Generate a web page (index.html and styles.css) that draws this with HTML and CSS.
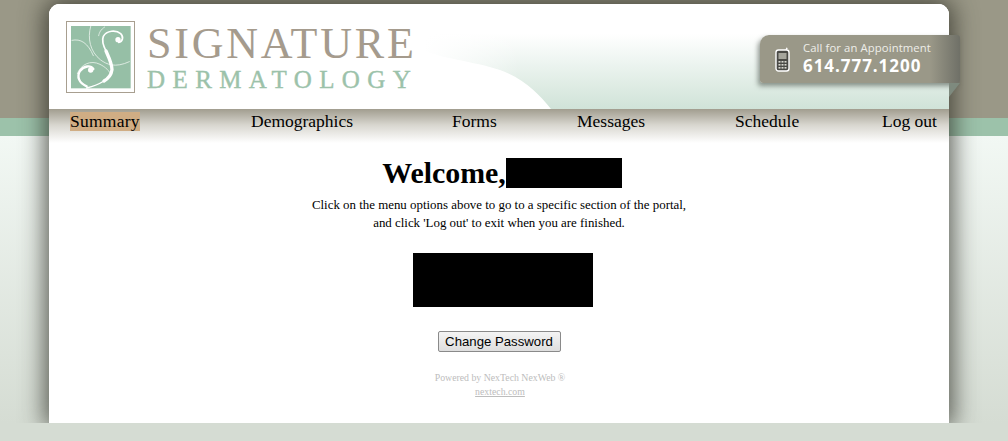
FILE: index.html
```html
<!DOCTYPE html>
<html lang="en">
<head>
<meta charset="utf-8">
<title>Signature Dermatology</title>
<link rel="stylesheet" href="styles.css">
</head>
<body>
<div class="page">
  <main class="card">
    <header class="header">
      <svg class="swoosh" width="900" height="105" viewBox="0 0 900 105" aria-hidden="true">
        <path d="M0 0H900V30H370V44C390 55 425 57 451 66C475 75 490 90 502 105H0Z" fill="#fff"/>
      </svg>
      <div class="logo">
        <svg class="mark" width="69" height="72" viewBox="18 18 207 216" aria-hidden="true">
          <rect x="19.5" y="19.5" width="204" height="213" fill="#fff" stroke="#a89f90" stroke-width="3"/>
          <rect x="33" y="33" width="179" height="187" fill="#96bfa6"/>
          <g fill="none" stroke="#e9f2ec" stroke-linecap="round" stroke-width="2.5">
            <path d="M92 34C82 70 90 110 122 135C140 148 165 160 208 140"/>
            <path d="M36 76C62 70 84 84 100 122"/>
            <path d="M134 36C122 44 118 52 116 62"/>
            <path d="M52 176C62 148 92 134 120 148C136 156 150 168 152 180"/>
          </g>
          <g fill="none" stroke="#fff" stroke-linecap="round">
            <path d="M176 82C188 80 192 66 182 56C168 44 140 46 130 64C124 78 130 92 138 108" stroke-width="5"/>
            <path d="M138 108C146 126 156 146 156 164C154 180 146 190 132 198" stroke-width="10"/>
            <path d="M132 198C116 208 100 214 80 219" stroke-width="4"/>
            <path d="M100 162C92 150 72 152 60 168C50 184 56 204 80 214" stroke-width="7"/>
          </g>
          <circle cx="174" cy="74" r="8" fill="#fff"/>
          <circle cx="92" cy="165" r="8" fill="#fff"/>
        </svg>
        <div class="wordmark">
          <div class="word-top">SIGNATURE</div>
          <div class="word-bottom">DERMATOLOGY</div>
        </div>
      </div>
    </header>
    <aside class="badge">
      <svg class="phone" width="15" height="25" viewBox="0 0 15 25" aria-hidden="true">
        <path d="M11 3.5L12 .8" stroke="#fff" stroke-width="1.4" fill="none"/>
        <rect x="1" y="3" width="13" height="21" rx="2.5" fill="#4a4a46" stroke="#fff" stroke-width="1.4"/>
        <rect x="3.5" y="6" width="8" height="6" fill="#a5a59c"/>
        <g fill="#d8d8d0">
          <rect x="3.5" y="14" width="2" height="1.6"/><rect x="6.5" y="14" width="2" height="1.6"/><rect x="9.5" y="14" width="2" height="1.6"/>
          <rect x="3.5" y="17" width="2" height="1.6"/><rect x="6.5" y="17" width="2" height="1.6"/><rect x="9.5" y="17" width="2" height="1.6"/>
          <rect x="3.5" y="20" width="2" height="1.6"/><rect x="6.5" y="20" width="2" height="1.6"/><rect x="9.5" y="20" width="2" height="1.6"/>
        </g>
      </svg>
      <div class="badge-text">
        <div class="badge-label">Call for an Appointment</div>
        <div class="badge-number">614.777.1200</div>
      </div>
    </aside>
    <nav class="nav">
      <a class="nav-link active" href="#">Summary</a>
      <a class="nav-link" href="#">Demographics</a>
      <a class="nav-link" href="#">Forms</a>
      <a class="nav-link" href="#">Messages</a>
      <a class="nav-link" href="#">Schedule</a>
      <a class="nav-link" href="#">Log out</a>
    </nav>
    <section class="content">
      <h1 class="welcome">Welcome,<span class="redact-name"></span></h1>
      <p class="intro">Click on the menu options above to go to a specific section of the portal,<br>and click 'Log out' to exit when you are finished.</p>
      <div class="redact-block"></div>
      <button class="change" type="button">Change Password</button>
      <p class="powered">Powered by NexTech NexWeb ®<br><a href="#">nextech.com</a></p>
    </section>
  </main>
</div>
</body>
</html>
```
FILE: styles.css
```css
html, body {
  margin: 0;
  height: 441px;
  overflow: hidden;
}
body {
  background: #d5dcd3;
  font-family: "Liberation Serif", serif;
}
.page {
  height: 423px;
  box-sizing: border-box;
  padding: 4px 0 0 49px;
  overflow: hidden;
  background:
    linear-gradient(180deg, #9a9887 0, #9a9887 118px, #9cc2aa 118px, #9cc2aa 136px, transparent 136px),
    linear-gradient(180deg, #f2f8f4 136px, #d5dcd3 423px);
}
.card {
  position: relative;
  width: 900px;
  height: 419px;
  background: #fff;
  border-radius: 11px 11px 0 0;
  box-shadow: 0 0 24px 4px rgba(40, 40, 32, .75);
}
.header {
  position: relative;
  height: 105px;
  box-sizing: border-box;
  padding: 17px 0 0 17px;
  border-radius: 11px 11px 0 0;
  overflow: hidden;
  background:
    linear-gradient(90deg, #fff 375px, rgba(255, 255, 255, 0) 470px),
    linear-gradient(180deg, #fff 30px, #d0e3d8 105px);
}
.swoosh {
  position: absolute;
  left: 0;
  top: 0;
}
.logo {
  position: relative;
  display: flex;
  gap: 12px;
}
.mark {
  display: block;
}
.word-top {
  font-size: 44px;
  line-height: 46px;
  letter-spacing: 2.8px;
  color: #a59b8d;
}
.word-bottom {
  font-size: 25px;
  line-height: 26px;
  letter-spacing: 7.4px;
  color: #9cc2aa;
  -webkit-text-stroke: .4px #9cc2aa;
}
.badge {
  position: absolute;
  left: 711px;
  top: 31px;
  width: 200px;
  height: 48px;
  box-sizing: border-box;
  padding: 0 0 0 15px;
  display: flex;
  align-items: center;
  gap: 13px;
  color: #fff;
  border-radius: 9px 3px 3px 3px;
  background: linear-gradient(90deg, #9a9888 0, #9a9888 85%, #6f7067 100%);
  box-shadow: -2px 3px 5px rgba(60, 70, 60, .55);
}
.badge::after {
  content: "";
  position: absolute;
  right: 0;
  top: 48px;
  border-top: 14px solid #7e8a7e;
  border-right: 11px solid transparent;
}
.phone {
  flex: none;
}
.badge-text {
  font-family: "Open Sans", sans-serif;
}
.badge-label {
  font-size: 11.3px;
  line-height: 14px;
  letter-spacing: .1px;
  color: #eeeee8;
}
.badge-number {
  font-size: 17px;
  line-height: 22px;
  font-weight: bold;
  letter-spacing: .95px;
}
.nav {
  height: 34px;
  box-sizing: border-box;
  padding: 3px 0 0 21px;
  display: grid;
  grid-template-columns: 181px 201px 125px 158px 147px auto;
  justify-items: start;
  align-items: start;
  background: linear-gradient(180deg, #a19d8f 0, #d8d6cf 16px, #fff 34px);
}
.nav-link {
  font-size: 17.5px;
  line-height: 19px;
  color: #000;
  text-decoration: none;
}
.active {
  background: #d0ad84;
  letter-spacing: .25px;
}
.content {
  display: flex;
  flex-direction: column;
  align-items: center;
}
.welcome {
  margin: 15px 0 0 6px;
  height: 30px;
  display: flex;
  align-items: flex-end;
  font-size: 29.9px;
  line-height: 30px;
  font-weight: bold;
}
.redact-name {
  display: block;
  width: 116px;
  height: 30px;
  background: #000;
}
.intro {
  margin: 8px 0 0;
  font-size: 12.9px;
  line-height: 18px;
  text-align: center;
  color: #000;
}
.redact-block {
  width: 180px;
  height: 54px;
  margin: 21px 0 0 8px;
  background: #000;
}
.change {
  margin-top: 24px;
  width: 123px;
  height: 21px;
  padding: 0;
  font-family: "Liberation Sans", sans-serif;
  font-size: 13.2px;
  color: #000;
  background: linear-gradient(180deg, #f4f4f4, #dedede);
  border: 1px solid #8a8a8a;
  border-radius: 2px;
}
.powered {
  margin: 19px 0 0 2px;
  font-size: 9.8px;
  line-height: 14px;
  text-align: center;
  color: #bdbdbd;
}
.powered a {
  color: #bdbdbd;
}
```
